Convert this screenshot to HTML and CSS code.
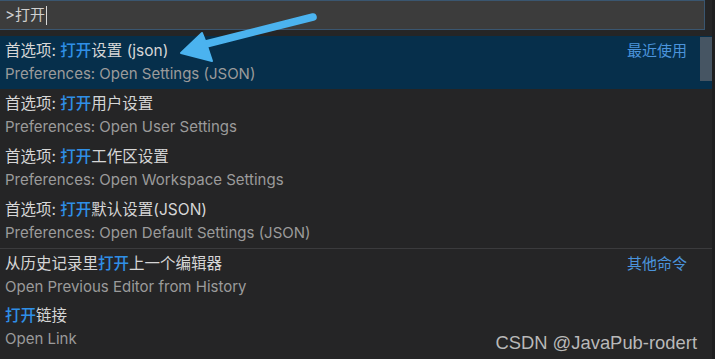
FILE: index.html
```html
<!DOCTYPE html>
<html lang="zh">
<head>
<meta charset="utf-8">
<link rel="stylesheet" href="styles.css">
</head>
<body>
<div class="palette">
  <div class="input-wrap">
    <div class="input">&gt;打开<span class="caret"></span></div>
  </div>
  <div class="list">
    <div class="item selected">
      <div class="texts">
        <div class="label">首选项: <span class="hl">打开</span>设置 (json)</div>
        <div class="desc">Preferences: Open Settings (JSON)</div>
      </div>
      <div class="tag">最近使用</div>
      <div class="scrollbar"></div>
    </div>
    <div class="item">
      <div class="texts">
        <div class="label">首选项: <span class="hl">打开</span>用户设置</div>
        <div class="desc">Preferences: Open User Settings</div>
      </div>
    </div>
    <div class="item">
      <div class="texts">
        <div class="label">首选项: <span class="hl">打开</span>工作区设置</div>
        <div class="desc">Preferences: Open Workspace Settings</div>
      </div>
    </div>
    <div class="item">
      <div class="texts">
        <div class="label">首选项: <span class="hl">打开</span>默认设置(JSON)</div>
        <div class="desc">Preferences: Open Default Settings (JSON)</div>
      </div>
    </div>
    <div class="item sep">
      <div class="texts">
        <div class="label">从历史记录里<span class="hl">打开</span>上一个编辑器</div>
        <div class="desc">Open Previous Editor from History</div>
      </div>
      <div class="tag">其他命令</div>
    </div>
    <div class="item">
      <div class="texts">
        <div class="label"><span class="hl">打开</span>链接</div>
        <div class="desc">Open Link</div>
      </div>
    </div>
  </div>
  <svg class="arrow" width="715" height="100" viewBox="0 0 715 100">
    <path d="M313 17 L206 44" stroke="#4bb3ef" stroke-width="7.5" stroke-linecap="round" fill="none"/>
    <path d="M181 53 L202 33 L206 43 L212 61 Z" fill="#4bb3ef" stroke="#4bb3ef" stroke-width="2" stroke-linejoin="round"/>
  </svg>
  <div class="watermark">CSDN @JavaPub-rodert</div>
</div>
</body>
</html>
```

FILE: styles.css
```css
html, body {
  margin: 0;
  padding: 0;
  background: #252526;
}
body {
  width: 715px;
  height: 359px;
  overflow: hidden;
  font-family: "Inter", "Noto Sans CJK SC", sans-serif;
}
.palette {
  position: relative;
  width: 712px;
  height: 359px;
  background: #252526;
  border-right: 3px solid #1e1e1f;
}
.input-wrap {
  padding: 0 7px 6px 0;
}
.input {
  height: 28px;
  background: #3c3c3c;
  border: 1px solid #3a5670;
  border-left: none;
  color: #d0d0d0;
  font-size: 15px;
  line-height: 28px;
  padding-left: 5px;
  display: flex;
  align-items: center;
}
.caret {
  display: inline-block;
  width: 1px;
  height: 19px;
  background: #d8d8d8;
  margin-left: 1px;
}
.list {
  display: flex;
  flex-direction: column;
}
.item {
  position: relative;
  height: 53px;
  display: flex;
  justify-content: space-between;
  padding-left: 5px;
  padding-right: 25px;
}
.item.selected {
  background: #062f4b;
}
.item.sep {
  border-top: 1px solid #3b3b3d;
  height: 52px;
}
.texts {
  display: flex;
  flex-direction: column;
}
.label {
  height: 26px;
  line-height: 30px;
  font-size: 15.5px;
  color: #d6d6d6;
}
.hl {
  color: #2f8fe6;
  font-weight: 500;
}
.desc {
  height: 24px;
  line-height: 24px;
  font-size: 15px;
  color: #9b9b9b;
}
.tag {
  line-height: 30px;
  font-size: 15px;
  color: #4b94dc;
}
.scrollbar {
  position: absolute;
  right: 0;
  top: 1px;
  width: 12px;
  height: 44px;
  background: #465563;
}
.arrow {
  position: absolute;
  left: 0;
  top: 0;
  pointer-events: none;
}
.watermark {
  position: absolute;
  right: 15px;
  bottom: 5px;
  font-family: "Liberation Sans", Arial, sans-serif;
  font-size: 18.4px;
  color: rgba(220, 220, 220, 0.82);
}
```
